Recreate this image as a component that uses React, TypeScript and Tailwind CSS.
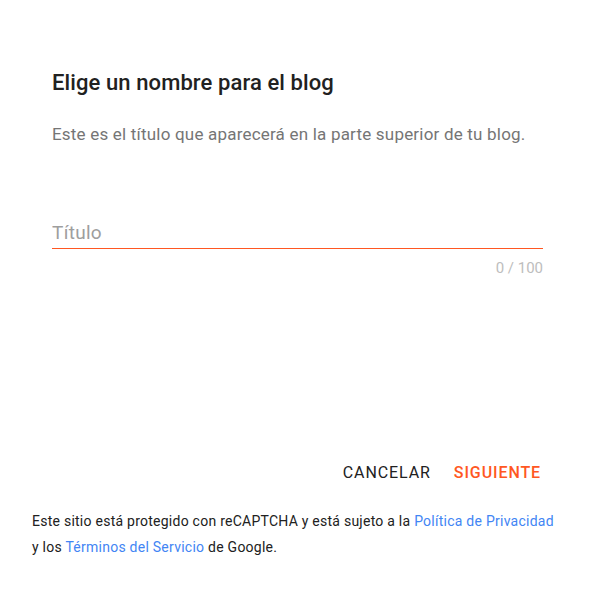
export default function App() {
  return (
    <div className="w-[597px] h-[590px] bg-white font-['Roboto',sans-serif] text-[#212121]">
      <div className="pl-[52px] pr-[54px] pt-[68px]">
        <h1 className="text-[22px] leading-[30px] font-medium tracking-[0.1px] text-[#212121]">
          Elige un nombre para el blog
        </h1>
        <p className="mt-[24px] text-[17px] leading-[24px] tracking-[0.2px] text-[#757575]">
          Este es el título que aparecerá en la parte superior de tu blog.
        </p>
        <div className="mt-[72px]">
          <input
            placeholder="Título"
            className="w-full h-[31px] text-[19px] tracking-[0.3px] outline-none border-b border-[#ff5722] placeholder:text-[#9e9e9e] pb-[2px]"
          />
          <div className="mt-[9px] text-right text-[15px] leading-[20px] text-[#bdbdbd]">0 / 100</div>
        </div>
      </div>
      <div className="flex justify-end gap-[23px] pr-[56px] mt-[185px]">
        <button className="text-[16px] leading-[20px] tracking-[0.9px] text-[#212121]">CANCELAR</button>
        <button className="text-[16px] leading-[20px] font-medium tracking-[0.9px] text-[#ff5722]">SIGUIENTE</button>
      </div>
      <p className="mt-[25px] pl-[32px] pr-[40px] text-[14px] leading-[26px] tracking-[0.25px] text-[#212121]">
        Este sitio está protegido con reCAPTCHA y está sujeto a la{" "}
        <a className="text-[#4285f4]">Política de Privacidad</a> y los{" "}
        <a className="text-[#4285f4]">Términos del Servicio</a> de Google.
      </p>
    </div>
  );
}
